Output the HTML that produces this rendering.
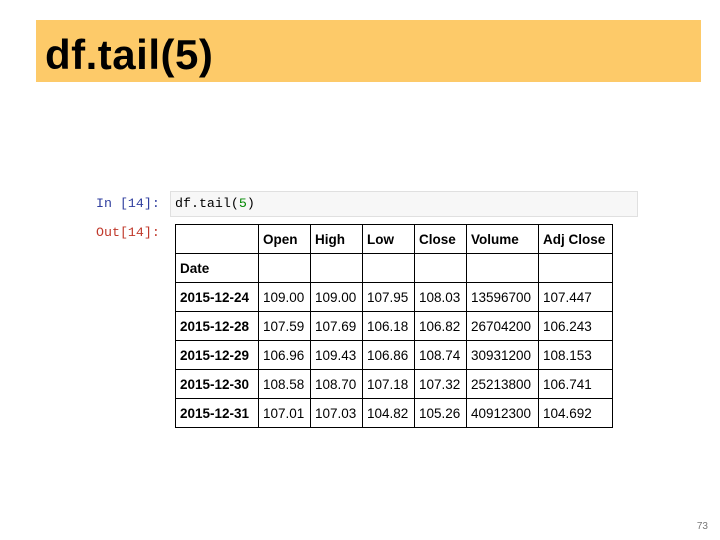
<!DOCTYPE html>
<html><head><style>
body{margin:0;width:720px;height:540px;background:#fff;position:relative;font-family:"Liberation Sans",sans-serif;overflow:hidden}
.ban{position:absolute;left:36px;top:20px;width:665px;height:62px;background:#fdca69}
.ban span{position:absolute;left:9px;top:11px;font-size:42px;font-weight:bold;color:#000;letter-spacing:0.5px}
.inp{position:absolute;left:170px;top:191px;width:468px;height:26px;background:#f7f7f7;border:1px solid #e0e0e0;box-sizing:border-box}
.mono{font-family:"Liberation Mono",monospace;font-size:13.3px;position:absolute}
table{position:absolute;left:175px;top:224px;border-collapse:collapse;font-size:13.5px;color:#000}
td{border:1px solid #000;height:29px;padding:0 4px;box-sizing:border-box}
.n{position:absolute;right:12px;bottom:8px;font-size:10px;color:#777}
</style></head><body>
<div class="ban"><span>df.tail(5)</span></div>
<div class="mono" style="left:96px;top:196px;color:#303f9f">In [14]:</div>
<div class="inp"></div>
<div class="mono" style="left:175px;top:196px;color:#000">df.tail(<span style="color:#080">5</span>)</div>
<div class="mono" style="left:96px;top:225px;color:#c0392b">Out[14]:</div>
<table>
<tr style="font-weight:bold"><td style="width:83px"></td><td style="width:52px">Open</td><td style="width:52px">High</td><td style="width:52px">Low</td><td style="width:52px">Close</td><td style="width:72px">Volume</td><td style="width:74px">Adj Close</td></tr>
<tr><td><b>Date</b></td><td></td><td></td><td></td><td></td><td></td><td></td></tr>
<tr><td><b>2015-12-24</b></td><td>109.00</td><td>109.00</td><td>107.95</td><td>108.03</td><td>13596700</td><td>107.447</td></tr>
<tr><td><b>2015-12-28</b></td><td>107.59</td><td>107.69</td><td>106.18</td><td>106.82</td><td>26704200</td><td>106.243</td></tr>
<tr><td><b>2015-12-29</b></td><td>106.96</td><td>109.43</td><td>106.86</td><td>108.74</td><td>30931200</td><td>108.153</td></tr>
<tr><td><b>2015-12-30</b></td><td>108.58</td><td>108.70</td><td>107.18</td><td>107.32</td><td>25213800</td><td>106.741</td></tr>
<tr><td><b>2015-12-31</b></td><td>107.01</td><td>107.03</td><td>104.82</td><td>105.26</td><td>40912300</td><td>104.692</td></tr>
</table>
<div class="n">73</div>
</body></html>
